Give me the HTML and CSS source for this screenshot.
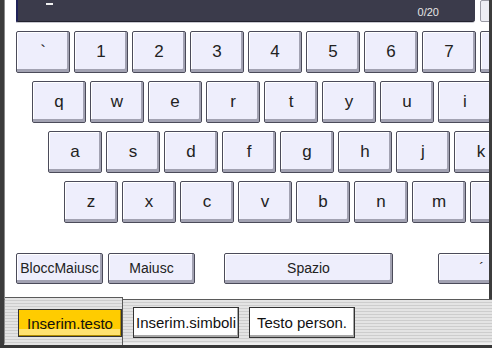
FILE: index.html
```html
<!DOCTYPE html>
<html lang="it">
<head>
  <meta charset="UTF-8">
  <meta name="viewport" content="width=device-width, initial-scale=1.0">
  <title>Inserim. testo</title>
  <link rel="stylesheet" href="styles.css">
</head>
<body>
  <div class="screen">
    <div class="panel">
      <div class="entry-row">
        <div class="entry">
          <span class="cursor"></span>
          <span class="count">0/20</span>
        </div>
        <div class="entry-btn"></div>
      </div>

      <div class="keys">
        <div class="krow r1">
          <div class="key">`</div>
          <div class="key">1</div>
          <div class="key">2</div>
          <div class="key">3</div>
          <div class="key">4</div>
          <div class="key">5</div>
          <div class="key">6</div>
          <div class="key">7</div>
          <div class="key">8</div>
        </div>
        <div class="krow r2">
          <div class="key">q</div>
          <div class="key">w</div>
          <div class="key">e</div>
          <div class="key">r</div>
          <div class="key">t</div>
          <div class="key">y</div>
          <div class="key">u</div>
          <div class="key">i</div>
          <div class="key">o</div>
        </div>
        <div class="krow r3">
          <div class="key">a</div>
          <div class="key">s</div>
          <div class="key">d</div>
          <div class="key">f</div>
          <div class="key">g</div>
          <div class="key">h</div>
          <div class="key">j</div>
          <div class="key">k</div>
          <div class="key">l</div>
        </div>
        <div class="krow r4">
          <div class="key">z</div>
          <div class="key">x</div>
          <div class="key">c</div>
          <div class="key">v</div>
          <div class="key">b</div>
          <div class="key">n</div>
          <div class="key">m</div>
          <div class="key">,</div>
        </div>
      </div>

      <div class="func-row">
        <div class="fkey">BloccMaiusc</div>
        <div class="fkey">Maiusc</div>
        <div class="fkey space">Spazio</div>
        <div class="fkey accent">´</div>
      </div>
    </div>

    <div class="tabbar">
      <div class="tab-sheet">
        <div class="tab active">Inserim.testo</div>
      </div>
      <div class="tab">Inserim.simboli</div>
      <div class="tab">Testo person.</div>
    </div>
    <div class="footer"></div>
  </div>
</body>
</html>
```

FILE: styles.css
```css
body {
  margin: 0;
  background-color: #3c3c3c;
  font-family: 'Liberation Sans', Arial, sans-serif;
  color: #222;
}
.screen {
  width: 492px;
  height: 348px;
  overflow: hidden;
}
.panel {
  margin-left: 4px;
  width: 484px;
  height: 299px;
  border-left: 1px solid #8a8a8a;
  background-color: #fff;
  overflow: hidden;
}
.entry-row {
  display: flex;
  height: 23px;
}
.entry {
  flex: none;
  display: flex;
  justify-content: space-between;
  align-items: flex-start;
  margin-left: 11px;
  width: 459px;
  height: 22px;
  box-sizing: border-box;
  background-color: #3b3b4b;
  border-left: 2px solid #1f2258;
  border-bottom: 1px solid #22222e;
  border-bottom-right-radius: 3px;
  box-shadow: 0 1px 0 #c8c8d0;
}
.cursor {
  margin-left: 28px;
  margin-top: 3px;
  width: 7px;
  height: 2px;
  background-color: #f0f0f0;
}
.count {
  margin-top: 6px;
  margin-right: 36px;
  font-size: 11px;
  line-height: 12px;
  color: #e6e6e6;
}
.entry-btn {
  flex: none;
  margin-left: 5px;
  width: 20px;
  height: 22px;
  box-sizing: border-box;
  background-color: #eeeef4;
  border: 1px solid #9a9aa4;
  border-radius: 2px;
}
.keys {
  margin-top: 8px;
  display: flex;
  flex-direction: column;
  gap: 8px;
}
.krow {
  display: flex;
  gap: 4px;
}
.r1 { margin-left: 11px; }
.r2 { margin-left: 27px; }
.r3 { margin-left: 43px; }
.r4 { margin-left: 59px; }
.key,
.fkey {
  flex: none;
  display: flex;
  align-items: center;
  justify-content: center;
  box-sizing: border-box;
  border: 1px solid #4b4b5a;
  border-radius: 2px;
  background-color: #eeeefc;
  box-shadow: inset -2px -3px 0 #a2a2b2, inset 1px 1px 0 #fff;
}
.key {
  width: 54px;
  height: 42px;
  padding-bottom: 1px;
  font-size: 17px;
}
.func-row {
  display: flex;
  margin-top: 30px;
  margin-left: 11px;
}
.fkey {
  width: 87px;
  height: 31px;
  padding-bottom: 2px;
  font-size: 14px;
  margin-right: 5px;
}
.fkey.space {
  width: 169px;
  margin-left: 24px;
}
.fkey.accent {
  margin-left: 40px;
  width: 87px;
}
.tabbar {
  display: flex;
  align-items: flex-start;
  margin-left: 4px;
  height: 43px;
  border-left: 1px solid #8a8a8a;
  border-top: 1px solid #5a5a5a;
  border-bottom: 2px solid #efefef;
  background: repeating-linear-gradient(to bottom, #e4e4e4 0, #e4e4e4 2px, #cdcdcd 2px, #cdcdcd 3px);
}
.tab-sheet {
  margin-top: -3px;
  padding: 11px 0 0 13px;
  width: 104px;
  height: 36px;
  border-top: 1px solid #5a5a5a;
  border-right: 1px solid #5a5a5a;
  background: repeating-linear-gradient(to bottom, #e4e4e4 0, #e4e4e4 2px, #cdcdcd 2px, #cdcdcd 3px);
}
.tab {
  flex: none;
  display: flex;
  align-items: center;
  justify-content: center;
  margin-top: 7px;
  margin-left: 10px;
  width: 106px;
  height: 31px;
  box-sizing: border-box;
  border: 1px solid #333;
  background-color: #fff;
  box-shadow: inset -1px -2px 0 #a8a8a8;
  font-size: 15px;
  color: #111;
}
.tab-sheet + .tab {
  margin-left: 10px;
}
.tab.active {
  margin: 0;
  width: 104px;
  height: 28px;
  background: linear-gradient(to bottom, #ffcc00 0, #ffcc00 72%, #ffe270 72%, #ffe270 100%);
  box-shadow: inset -1px -1px 0 #b08c00;
}
.footer {
  height: 6px;
  background-color: #383838;
}
```
